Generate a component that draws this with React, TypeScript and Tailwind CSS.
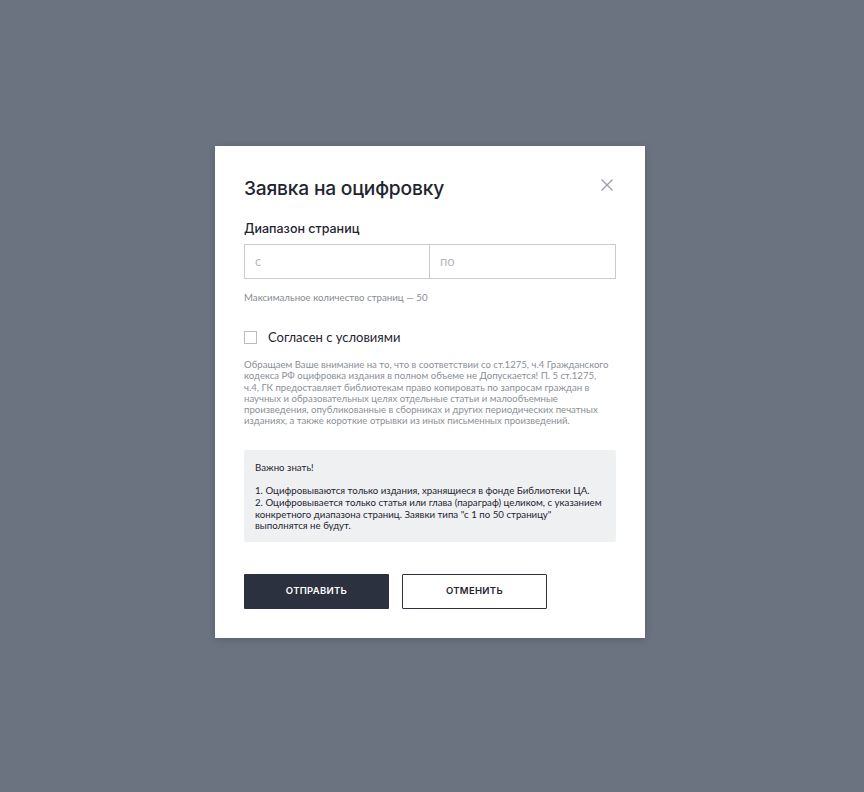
import React from 'react';

export default function App() {
  return (
    <div className="min-h-screen w-full bg-[#6b7280] flex items-start justify-center pt-[146px] pr-[4px]">
      <div className="w-[430px] bg-white shadow-[0_2px_8px_rgba(0,0,0,0.15)] px-[29px] pt-[30px] pb-[29px]">
        <div className="flex items-start justify-between">
          <h2 className="font-['Inter',sans-serif] text-[19.2px] leading-[24px] font-medium text-[#1f2430] tracking-[-0.2px]">
            Заявка на оцифровку
          </h2>
          <button className="mt-[2px] mr-[2px] text-[#9aa0a8]" aria-label="Закрыть">
            <svg width="14" height="14" viewBox="0 0 14 14" fill="none" stroke="currentColor" strokeWidth="1.3">
              <path d="M1.5 1.5 L12.5 12.5 M12.5 1.5 L1.5 12.5" />
            </svg>
          </button>
        </div>

        <div className="mt-[21px] font-['Inter',sans-serif] text-[12.5px] leading-[16px] font-medium text-[#1f2430]">
          Диапазон страниц
        </div>

        <div className="mt-[7px] flex border border-[#c8ccd2] h-[35px]">
          <input
            placeholder="с"
            className="w-1/2 px-[10px] font-['Lato',sans-serif] text-[13px] text-[#1f2430] placeholder:text-[#b4b8be] outline-none border-r border-[#c8ccd2]"
          />
          <input
            placeholder="по"
            className="w-1/2 px-[10px] font-['Lato',sans-serif] text-[13px] text-[#1f2430] placeholder:text-[#b4b8be] outline-none"
          />
        </div>

        <p className="mt-[11px] font-['Lato',sans-serif] text-[9.7px] leading-[14px] text-[#868b93]">
          Максимальное количество страниц — 50
        </p>

        <label className="mt-[24px] flex items-center gap-[11px] cursor-pointer">
          <span className="w-[13px] h-[13px] border border-[#b9bdc3] bg-white" />
          <span className="font-['Lato',sans-serif] text-[13px] leading-[18px] text-[#1f2430]">
            Согласен с условиями
          </span>
        </label>

        <p className="mt-[13px] whitespace-nowrap font-['Lato',sans-serif] text-[9.6px] leading-[11.3px] text-[#8b9098]">
          Обращаем Ваше внимание на то, что в соответствии со ст.1275, ч.4 Гражданского
          <br />
          кодекса РФ оцифровка издания в полном объеме не Допускается! П. 5 ст.1275,
          <br />
          ч.4, ГК предоставляет библиотекам право копировать по запросам граждан в
          <br />
          научных и образовательных целях отдельные статьи и малообъемные
          <br />
          произведения, опубликованные в сборниках и других периодических печатных
          <br />
          изданиях, а также короткие отрывки из иных письменных произведений.
        </p>

        <div className="mt-[23px] bg-[#eff0f2] rounded-[2px] px-[11px] pt-[12px] pb-[10px] font-['Lato',sans-serif] text-[9.7px] leading-[11.7px] text-[#1f2430]">
          <p>Важно знать!</p>
          <p className="mt-[11.7px]">1. Оцифровываются только издания, хранящиеся в фонде Библиотеки ЦА.</p>
          <p>
            2. Оцифровывается только статья или глава (параграф) целиком, с указанием конкретного диапазона страниц. Заявки типа "с 1 по 50 страницу" выполнятся не будут.
          </p>
        </div>

        <div className="mt-[32px] flex gap-[13px]">
          <button className="w-[145px] h-[35px] bg-[#2b313e] text-white font-['Inter',sans-serif] text-[9.5px] font-semibold tracking-[0.3px] rounded-[1px]">
            ОТПРАВИТЬ
          </button>
          <button className="w-[145px] h-[35px] bg-white border border-[#2b313e] text-[#1f2430] font-['Inter',sans-serif] text-[9.5px] font-semibold tracking-[0.3px] rounded-[1px]">
            ОТМЕНИТЬ
          </button>
        </div>
      </div>
    </div>
  );
}
